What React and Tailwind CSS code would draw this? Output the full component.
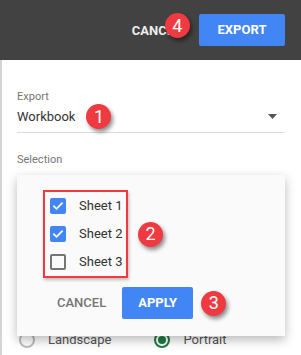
import React from 'react';

function Badge({ n, className = '' }) {
  return (
    <span
      className={`flex h-[25px] w-[25px] items-center justify-center rounded-full bg-[#ee3a40] text-[18px] leading-none text-white shadow-[2px_3px_4px_rgba(0,0,0,0.45)] ${className}`}
    >
      {n}
    </span>
  );
}

function Checkbox({ checked }) {
  if (checked) {
    return (
      <span className="flex h-[16px] w-[16px] items-center justify-center rounded-[2px] bg-[#4285f4]">
        <svg width="12" height="12" viewBox="0 0 24 24" fill="none" stroke="white" strokeWidth="3.5" strokeLinecap="square">
          <path d="M4 12.5l5 5L20 6.5" />
        </svg>
      </span>
    );
  }
  return <span className="h-[16px] w-[16px] rounded-[2px] border-2 border-[#757575]" />;
}

function Radio({ checked }) {
  return (
    <span
      className={`flex h-[16px] w-[16px] items-center justify-center rounded-full border-2 ${
        checked ? 'border-[#1e7e45]' : 'border-[#bdbdbd]'
      }`}
    >
      {checked && <span className="h-[8px] w-[8px] rounded-full bg-[#1e7e45]" />}
    </span>
  );
}

export default function App() {
  const sheets = [
    { name: 'Sheet 1', checked: true },
    { name: 'Sheet 2', checked: true },
    { name: 'Sheet 3', checked: false },
  ];

  return (
    <div className="h-[355px] w-[301px] overflow-hidden bg-white font-['Roboto',sans-serif]">
      {/* Top bar */}
      <header className="flex h-[60px] items-center justify-end bg-[#424242] pr-[16px]">
        <div className="relative mr-[18px]">
          <span className="text-[13px] font-bold text-[#eeeeee]">CANCEL</span>
          <Badge n="4" className="absolute left-[33px] top-[-5px]" />
        </div>
        <button className="h-[32px] w-[86px] rounded-[2px] bg-[#4285f4] text-[13px] font-bold text-white">
          EXPORT
        </button>
      </header>

      <main className="h-[295px] border-l-2 border-[#d4d4d4] pl-[15px] pr-[16px] pt-[30px]">
        {/* Export field */}
        <div className="text-[11px] leading-[14px] text-[#757575]">Export</div>
        <div className="flex items-center border-b border-[#dcdcdc] pb-[3px]">
          <span className="text-[13px] leading-[20px] text-[#333333]">Workbook</span>
          <Badge n="1" className="ml-[11px]" />
          <svg className="ml-auto mr-[8px]" width="9" height="5" viewBox="0 0 9 5">
            <path d="M0 0h9L4.5 5z" fill="#555555" />
          </svg>
        </div>

        <div className="mt-[20px] text-[11px] leading-[14px] text-[#757575]">Selection</div>

        {/* Selection popover */}
        <div className="relative z-10 mt-[8px] h-[161px] bg-[#fafafa] pl-[26px] pt-[15px] shadow-[0_4px_10px_rgba(0,0,0,0.28)]">
          <div className="flex items-center">
            <div className="w-[85px] border-2 border-[#ee3a40] pl-[5px] shadow-[1px_2px_3px_rgba(0,0,0,0.25)]">
              {sheets.map((s) => (
                <div key={s.name} className="flex h-[28px] items-center gap-[13px]">
                  <Checkbox checked={s.checked} />
                  <span className="text-[13px] text-[#333333]">{s.name}</span>
                </div>
              ))}
            </div>
            <Badge n="2" className="ml-[10px]" />
          </div>

          <div className="mt-[9px] flex items-center">
            <button className="ml-[-2px] h-[32px] px-[16px] text-[13px] font-medium text-[#757575]">
              CANCEL
            </button>
            <button className="h-[32px] w-[71px] rounded-[2px] bg-[#4285f4] text-[13px] font-bold text-white">
              APPLY
            </button>
            <Badge n="3" className="ml-[8px]" />
          </div>
        </div>

        {/* Orientation */}
        <div className="mt-[-6px] flex h-[20px] items-center">
          <div className="ml-[2px] flex items-center gap-[13px]">
            <Radio checked={false} />
            <span className="text-[13px] text-[#555555]">Landscape</span>
          </div>
          <div className="ml-[43px] flex items-center gap-[13px]">
            <Radio checked />
            <span className="text-[13px] text-[#555555]">Portrait</span>
          </div>
        </div>
      </main>
    </div>
  );
}
